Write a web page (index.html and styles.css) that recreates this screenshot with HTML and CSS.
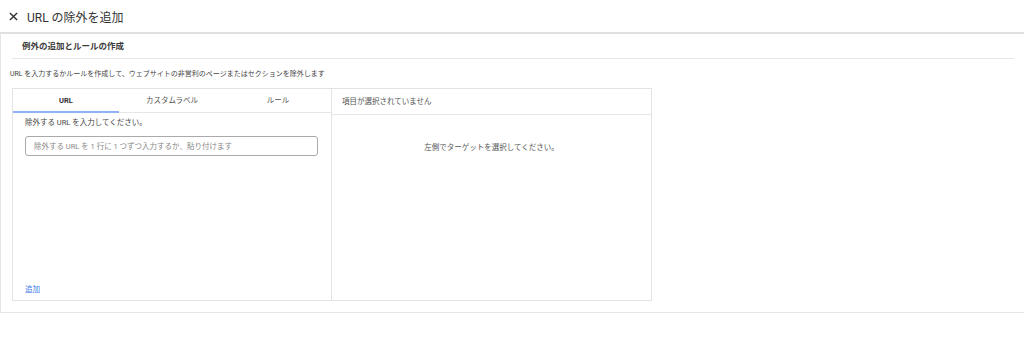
FILE: index.html
```html
<!DOCTYPE html>
<html lang="ja">
<head>
<meta charset="UTF-8">
<meta name="viewport" content="width=device-width, initial-scale=1.0">
<title>URL の除外を追加</title>
<link rel="stylesheet" href="styles.css">
</head>
<body>

<header class="page-header">
  <button class="close-btn" aria-label="閉じる">
    <svg width="9" height="9" viewBox="0 0 10 10"><path d="M1 1L9 9M9 1L1 9" stroke="#333" stroke-width="1.6" fill="none"/></svg>
  </button>
  <h1>URL の除外を追加</h1>
</header>

<div class="card">
  <h2 class="card-title">例外の追加とルールの作成</h2>
  <p class="card-desc">URL を入力するかルールを作成して、ウェブサイトの非営利のページまたはセクションを除外します</p>

  <div class="picker">
    <div class="picker-left">
      <div class="tabs">
        <div class="tab active">URL</div>
        <div class="tab">カスタムラベル</div>
        <div class="tab">ルール</div>
      </div>
      <div class="tab-body">
        <p class="hint">除外する URL を入力してください。</p>
        <input class="url-input" type="text" placeholder="除外する URL を 1 行に 1 つずつ入力するか、貼り付けます">
        <a class="add-link" href="#">追加</a>
      </div>
    </div>
    <div class="picker-right">
      <div class="selected-head">項目が選択されていません</div>
      <p class="empty-msg">左側でターゲットを選択してください。</p>
    </div>
  </div>
</div>

</body>
</html>
```

FILE: styles.css
```css
body {
  margin: 0;
  font-family: Roboto, "Noto Sans CJK JP", sans-serif;
  color: #333;
  background: #fff;
}

h1, h2, p { margin: 0; }

/* top bar */
.page-header {
  height: 32px;
  display: flex;
  align-items: center;
  padding-left: 8px;
  border-bottom: 2px solid #e0e0e0;
  margin-top: -1px;
  padding-top: 1px;
}

.close-btn {
  border: none;
  background: none;
  padding: 0;
  width: 10px;
  height: 10px;
  display: flex;
  align-items: center;
  justify-content: center;
  cursor: pointer;
}

.page-header h1 {
  font-size: 12px;
  font-weight: 400;
  margin-left: 9px;
  color: #333;
}

/* card */
.card {
  border-left: 1px solid #e6e6e6;
  border-bottom: 1px solid #e6e6e6;
  padding: 0 10px 11px 9px;
}

.card-title {
  margin-left: 2px;
  height: 24px;
  line-height: 24px;
  padding-left: 10px;
  font-size: 8.5px;
  font-weight: 700;
  color: #3c3c3c;
  border-bottom: 1px solid #e6e6e6;
}

.card-desc {
  margin: 10px 0 9px;
  line-height: 10px;
  font-size: 7px;
  color: #444;
}

.picker {
  margin-left: 2px;
  width: 638px;
  height: 211px;
  border: 1px solid #e3e3e3;
  display: grid;
  grid-template-columns: 319px 1fr;
}

.picker-left {
  border-right: 1px solid #e3e3e3;
  display: flex;
  flex-direction: column;
}

.tabs {
  display: flex;
  height: 23px;
  border-bottom: 1px solid #e6e6e6;
}

.tab {
  flex: 1;
  text-align: center;
  line-height: 23px;
  font-size: 7.5px;
  color: #555;
}

.tab.active {
  font-weight: 700;
  color: #333;
  border-bottom: 2px solid #8fb3f3;
  margin-bottom: -1px;
}

.tab-body {
  flex: 1;
  display: flex;
  flex-direction: column;
  padding: 5px 13px 5px 12px;
}

.hint {
  font-size: 7.5px;
  line-height: 10px;
  color: #444;
}

.url-input {
  margin-top: 8px;
  height: 20px;
  box-sizing: border-box;
  border: 1px solid #aaa;
  border-radius: 3px;
  padding: 0 8px;
  font-family: inherit;
  font-size: 7.5px;
  color: #333;
}

.url-input::placeholder { color: #888; }

.add-link {
  margin-top: auto;
  font-size: 7.5px;
  line-height: 10px;
  color: #3b78e7;
  text-decoration: none;
  align-self: flex-start;
}

.selected-head {
  height: 25px;
  line-height: 25px;
  padding-left: 10px;
  font-size: 7.5px;
  color: #555;
  border-bottom: 1px solid #e6e6e6;
}

.empty-msg {
  margin-top: 28px;
  text-align: center;
  font-size: 7.5px;
  line-height: 10px;
  color: #555;
}
```
